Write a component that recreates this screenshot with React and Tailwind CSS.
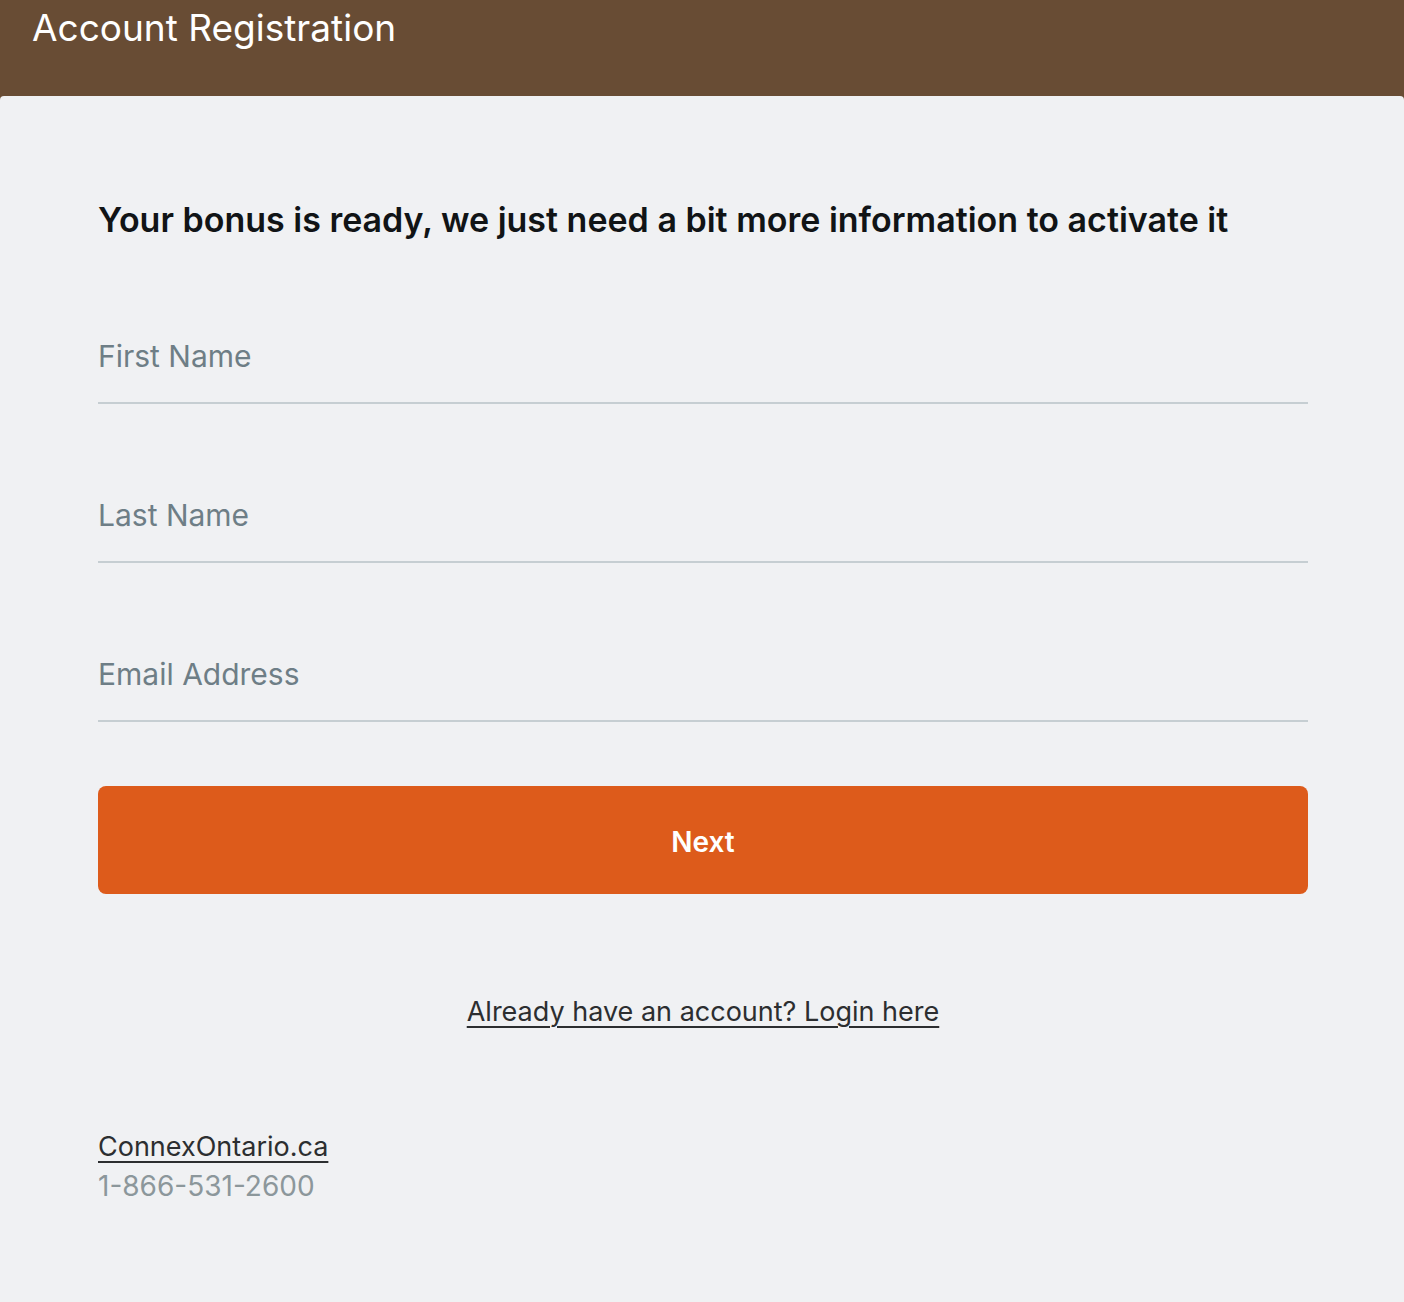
export default function App() {
  return (
    <div className="min-h-[1302px] bg-[#684c34] flex flex-col" style={{ fontFamily: 'Inter, "Noto Sans", sans-serif' }}>
      <header className="h-[96px] px-8 pt-[6px] shrink-0">
        <h1 className="text-white text-[37px] leading-[44px] font-normal">Account Registration</h1>
      </header>
      <main className="flex-1 bg-[#f0f1f3] rounded-t-[4px] pl-[98px] pr-[96px] pt-[102px] pb-[100px] flex flex-col">
        <h2 className="text-[#111416] text-[34px] leading-[44px] font-semibold">
          Your bonus is ready, we just need a bit more information to activate it
        </h2>
        <div className="mt-[66px] flex flex-col gap-[63px]">
          {["First Name", "Last Name", "Email Address"].map((l) => (
            <div key={l} className="h-[96px] border-b-2 border-[#c6ced2] flex items-center">
              <span className="text-[30px] text-[#6e7e86] leading-[40px] mt-[2px]">{l}</span>
            </div>
          ))}
        </div>
        <button className="mt-[64px] h-[108px] w-full rounded-[8px] bg-[#dd5b1b] text-white text-[28px] font-semibold pt-[4px]">
          Next
        </button>
        <div className="mt-[98px] text-center">
          <a href="#" className="text-[27px] text-[#2c2e30] underline underline-offset-[5px] decoration-2">Already have an account? Login here</a>
        </div>
        <div className="mt-[94px] flex flex-col">
          <a href="#" className="text-[27px] text-[#2c2e30] underline underline-offset-[5px] decoration-2 leading-[40px] self-start">ConnexOntario.ca</a>
          <span className="text-[28px] text-[#8c979b] leading-[38px]">1-866-531-2600</span>
        </div>
      </main>
    </div>
  );
}
